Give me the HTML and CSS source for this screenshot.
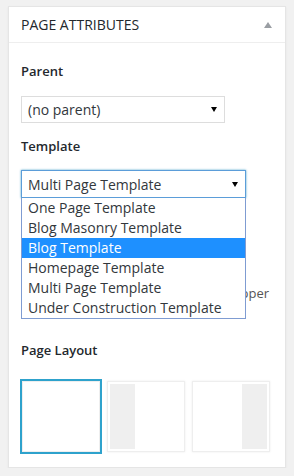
FILE: index.html
```html
<!DOCTYPE html>
<html lang="en">
<head>
    <meta charset="UTF-8">
    <meta name="viewport" content="width=device-width, initial-scale=1.0">
    <title>Page Attributes</title>
    <link rel="stylesheet" href="styles.css">
</head>
<body>
    <div class="postbox">
        <div class="postbox-header">
            <h2>Page Attributes</h2>
            <span class="toggle-arrow"></span>
        </div>
        <div class="inside">
            <p class="attr-label">Parent</p>
            <div class="fake-select parent-select">
                <span>(no parent)</span>
                <span class="caret"></span>
            </div>

            <p class="attr-label">Template</p>
            <div class="template-wrap">
                <div class="fake-select template-select">
                    <span>Multi Page Template</span>
                    <span class="caret"></span>
                </div>
                <ul class="dropdown">
                    <li>One Page Template</li>
                    <li>Blog Masonry Template</li>
                    <li class="active">Blog Template</li>
                    <li>Homepage Template</li>
                    <li>Multi Page Template</li>
                    <li>Under Construction Template</li>
                </ul>
                <p class="template-help">
                    <span class="help-line first">Pick a template to show the upper</span>
                    <span class="help-line">gallery</span>
                </p>
            </div>

            <p class="attr-label layout-label">Page Layout</p>
            <div class="layouts">
                <div class="layout-option selected"></div>
                <div class="layout-option sidebar-left"><span class="side"></span></div>
                <div class="layout-option sidebar-right"><span class="side"></span></div>
            </div>
        </div>
    </div>
</body>
</html>
```

FILE: styles.css
```css
body {
    margin: 0;
    background-color: #f1f1f1;
    font-family: "Open Sans", "Liberation Sans", sans-serif;
    color: #23282d;
}

.postbox {
    margin: 6px 0 0 8px;
    width: 276px;
    background-color: #fff;
    border: 1px solid #e5e5e5;
    box-shadow: 0 1px 2px rgba(0, 0, 0, 0.06);
}

.postbox-header {
    display: flex;
    align-items: center;
    justify-content: space-between;
    height: 35px;
    padding: 0 13px 0 12px;
    border-bottom: 1px solid #eee;
}

.postbox-header h2 {
    margin: 0;
    font-size: 14px;
    font-weight: 400;
    text-transform: uppercase;
    color: #23282d;
}

.toggle-arrow {
    width: 0;
    height: 0;
    border-left: 4px solid transparent;
    border-right: 4px solid transparent;
    border-bottom: 6px solid #9a9ea3;
}

.inside {
    padding: 19px 12px 15px;
}

.attr-label {
    margin: 0;
    font-size: 13px;
    font-weight: 600;
    line-height: 18px;
}

.fake-select {
    display: flex;
    align-items: center;
    justify-content: space-between;
    box-sizing: border-box;
    padding: 0 7px 0 6px;
    font-size: 14px;
    color: #32373c;
    background-color: #fff;
    border: 1px solid #ddd;
}

.parent-select {
    width: 204px;
    height: 27px;
    margin: 16px 0 14px;
}

.caret {
    width: 0;
    height: 0;
    border-left: 3px solid transparent;
    border-right: 3px solid transparent;
    border-top: 5px solid #000;
}

.template-wrap {
    position: relative;
    margin-top: 15px;
}

.template-select {
    width: 225px;
    height: 28px;
    border-color: #5b9dd9;
    box-shadow: 0 0 2px rgba(30, 140, 190, 0.8);
}

.dropdown {
    position: absolute;
    top: 28px;
    left: 0;
    width: 225px;
    box-sizing: border-box;
    margin: 0;
    padding: 0;
    list-style: none;
    background-color: #fff;
    border: 1px solid #7f9cd2;
    border-top: none;
    z-index: 2;
}

.dropdown li {
    height: 20px;
    line-height: 20px;
    padding: 0 6px;
    font-size: 14px;
    color: #32373c;
}

.dropdown li.active {
    background-color: #1e90ff;
    color: #fff;
}

.template-help {
    margin: 86px 0 0;
    font-size: 13px;
    line-height: 18px;
    color: #555;
}

.help-line {
    display: block;
    white-space: nowrap;
    overflow: hidden;
}

.help-line.first {
    text-align: right;
    padding-right: 4px;
}

.layout-label {
    margin-top: 21px;
}

.layouts {
    display: flex;
    gap: 7px;
    margin-top: 22px;
    padding-left: 1px;
}

.layout-option {
    display: flex;
    box-sizing: border-box;
    width: 78px;
    height: 71px;
    padding: 2px;
    border: 1px solid #eee;
    box-shadow: 0 0 2px rgba(0, 0, 0, 0.08);
}

.layout-option.selected {
    outline: 2px solid #2ea2cc;
}

.sidebar-right {
    justify-content: flex-end;
}

.side {
    width: 25px;
    background-color: #efefef;
}
```
